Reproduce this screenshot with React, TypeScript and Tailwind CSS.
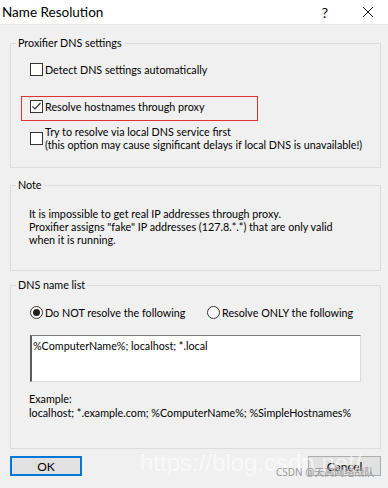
import React from "react";

function Check({ checked }: { checked?: boolean }) {
  return (
    <div className="w-[13px] h-[13px] shrink-0 border border-[#333333] bg-white flex items-center justify-center">
      {checked && (
        <svg width="11" height="11" viewBox="0 0 11 11">
          <path d="M1.5 5.5 L4 8 L9.5 2" fill="none" stroke="#333" strokeWidth="1.2" />
        </svg>
      )}
    </div>
  );
}

function Radio({ checked }: { checked?: boolean }) {
  return (
    <div className="w-[13px] h-[13px] shrink-0 rounded-full border border-[#333333] bg-white flex items-center justify-center">
      {checked && <div className="w-[7px] h-[7px] rounded-full bg-[#222]" />}
    </div>
  );
}

function Group({ title, children, className }: { title: string; children: React.ReactNode; className?: string }) {
  return (
    <fieldset className={"ml-[10px] mr-[7px] border border-[#dcdcdc] px-[5px] " + (className ?? "")}>
      <legend className="px-[2px] leading-[16px]">{title}</legend>
      {children}
    </fieldset>
  );
}

export default function App() {
  return (
    <div className="w-[388px] h-[488px] bg-[#f0f0f0] text-[10.75px] text-black leading-[13px] whitespace-nowrap font-['Lato',sans-serif] relative overflow-hidden">
      <div className="h-[25px] bg-white flex items-center border-b border-[#e8e8e8]">
        <span className="ml-[2px] text-[13.5px] leading-[20px]">Name Resolution</span>
        <span className="ml-auto text-[14px] mr-[34px]">?</span>
        <svg width="12" height="12" viewBox="0 0 12 12" className="mr-[14px]">
          <path d="M1 1 L11 11 M11 1 L1 11" stroke="#111" strokeWidth="1" />
        </svg>
      </div>

      <Group title="Proxifier DNS settings" className="mt-[10px] pb-[16px]">
        <div className="flex items-center gap-[2px] ml-[14px] mt-[10px] h-[16px]">
          <Check />
          <span>Detect DNS settings automatically</span>
        </div>
        <div className="ml-[5px] mt-[19px] w-[237px] h-[25px] border border-[#e03131] pl-[8px] pt-[1px]">
          <div className="flex items-center gap-[2px] h-[16px]">
            <Check checked />
            <span>Resolve hostnames through proxy</span>
          </div>
        </div>
        <div className="flex items-center gap-[2px] ml-[14px] mt-[4px]">
          <Check />
          <div>
            <div>Try to resolve via local DNS service first</div>
            <div>(this option may cause significant delays if local DNS is unavailable!)</div>
          </div>
        </div>
      </Group>

      <Group title="Note" className="mt-[9px] pb-[24px]">
        <div className="ml-[13px] mt-[14px]">
          <div>It is impossible to get real IP addresses through proxy.</div>
          <div>Proxifier assigns "fake" IP addresses (127.8.*.*) that are only valid</div>
          <div>when it is running.</div>
        </div>
      </Group>

      <Group title="DNS name list" className="mt-[6px] pb-[29px]">
        <div className="flex items-center ml-[14px] mt-[11px] h-[16px]">
          <div className="flex items-center gap-[2px] w-[177px]">
            <Radio checked />
            <span>Do NOT resolve the following</span>
          </div>
          <div className="flex items-center gap-[2px]">
            <Radio />
            <span>Resolve ONLY the following</span>
          </div>
        </div>
        <div className="ml-[14px] mt-[15px] w-[331px] h-[47px] bg-white border-t border-t-[#7a7a7a] border-l-2 border-l-[#5a5a5a] border-r border-r-[#dcdcdc] border-b border-b-[#dcdcdc] pl-[1px] pt-[3px]">
          %ComputerName%; localhost; *.local
        </div>
        <div className="ml-[13px] mt-[10px]">
          <div>Example:</div>
          <div className="mt-[1px]">localhost; *.example.com; %ComputerName%; %SimpleHostnames%</div>
        </div>
      </Group>

      <div className="flex justify-between ml-[10px] mr-[7px] mt-[7px]">
        <div className="w-[72px] h-[20px] border-2 border-[#0078d7] bg-[#e1e1e1] flex items-center justify-center text-[12px]">OK</div>
        <div className="w-[73px] h-[20px] border border-[#adadad] bg-[#e1e1e1] flex items-center justify-center text-[12px]">Cancel</div>
      </div>

      <div className="absolute left-[140px] top-[448px] text-[24px] leading-[30px] text-white/60 pointer-events-none font-['Liberation_Sans',sans-serif]">https://blog.csdn.net/</div>
      <div className="absolute left-[276px] top-[466px] text-[10px] leading-[12px] text-[#999] pointer-events-none font-['Noto_Sans','Noto_Sans_CJK_SC',sans-serif]">CSDN @天高网络战队</div>
    </div>
  );
}
